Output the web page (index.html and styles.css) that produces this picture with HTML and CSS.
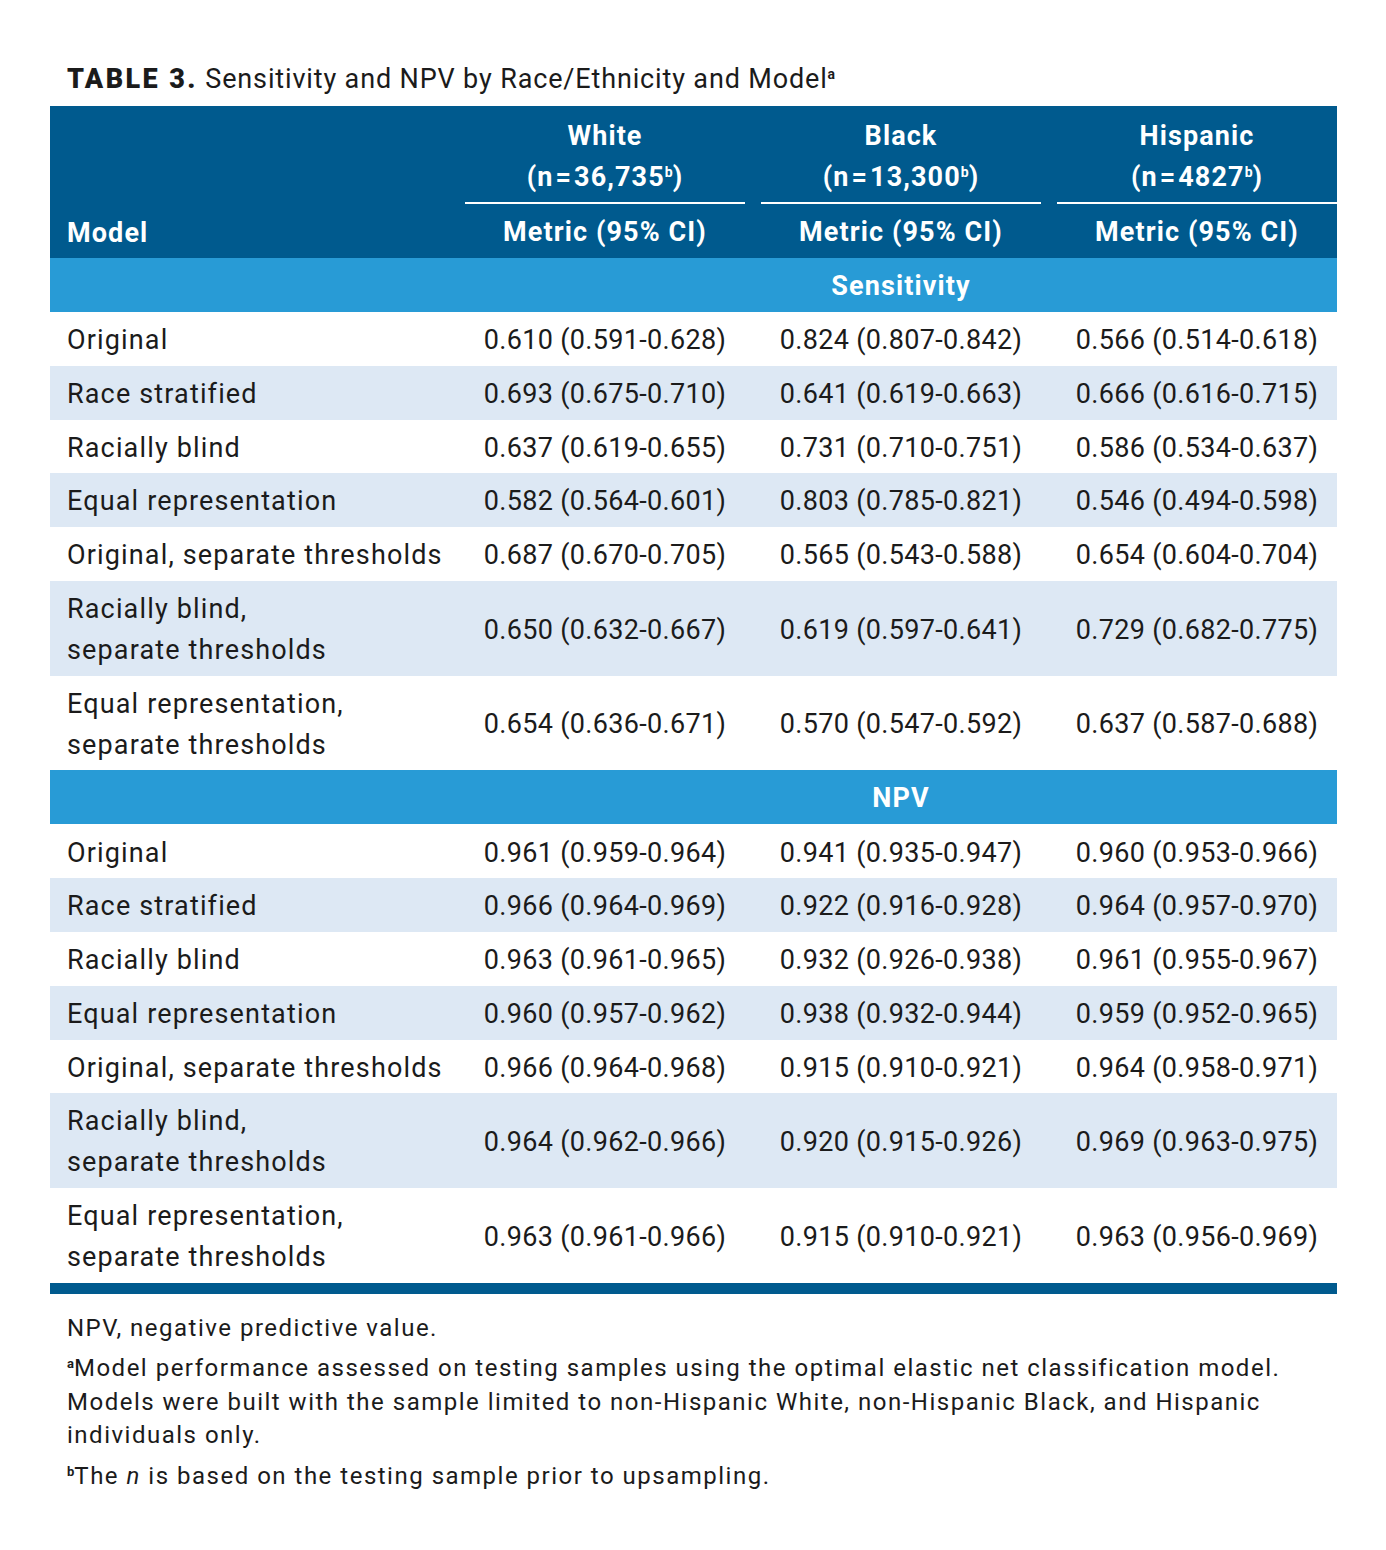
FILE: index.html
```html
<!DOCTYPE html>
<html lang="en">
<head>
<meta charset="utf-8">
<title>Table 3</title>
<link rel="stylesheet" href="styles.css">
</head>
<body>
<div class="page">
  <h1 class="title"><span class="tlabel">TABLE 3.</span> Sensitivity and NPV by Race/Ethnicity and Model<sup>a</sup></h1>
  <table class="tbl">
    <colgroup>
      <col class="c-model">
      <col class="c-data">
      <col class="c-data">
      <col class="c-data">
    </colgroup>
    <thead>
      <tr class="hrow1">
        <th class="model-h" rowspan="2">Model</th>
        <th class="grp"><div class="grp-in">White<br>(n<span class="eq">=</span>36,735<sup>b</sup>)</div></th>
        <th class="grp"><div class="grp-in">Black<br>(n<span class="eq">=</span>13,300<sup>b</sup>)</div></th>
        <th class="grp"><div class="grp-in">Hispanic<br>(n<span class="eq">=</span>4827<sup>b</sup>)</div></th>
      </tr>
      <tr class="hrow2">
        <th class="metric">Metric (95% CI)</th>
        <th class="metric">Metric (95% CI)</th>
        <th class="metric">Metric (95% CI)</th>
      </tr>
    </thead>
    <tbody>
      <tr class="section"><td></td><td colspan="3" class="sec-label">Sensitivity</td></tr>
      <tr><td class="m">Original</td><td class="d">0.610 (0.591-0.628)</td><td class="d">0.824 (0.807-0.842)</td><td class="d">0.566 (0.514-0.618)</td></tr>
      <tr class="alt"><td class="m">Race stratified</td><td class="d">0.693 (0.675-0.710)</td><td class="d">0.641 (0.619-0.663)</td><td class="d">0.666 (0.616-0.715)</td></tr>
      <tr><td class="m">Racially blind</td><td class="d">0.637 (0.619-0.655)</td><td class="d">0.731 (0.710-0.751)</td><td class="d">0.586 (0.534-0.637)</td></tr>
      <tr class="alt"><td class="m">Equal representation</td><td class="d">0.582 (0.564-0.601)</td><td class="d">0.803 (0.785-0.821)</td><td class="d">0.546 (0.494-0.598)</td></tr>
      <tr><td class="m">Original, separate thresholds</td><td class="d">0.687 (0.670-0.705)</td><td class="d">0.565 (0.543-0.588)</td><td class="d">0.654 (0.604-0.704)</td></tr>
      <tr class="alt"><td class="m">Racially blind,<br>separate thresholds</td><td class="d">0.650 (0.632-0.667)</td><td class="d">0.619 (0.597-0.641)</td><td class="d">0.729 (0.682-0.775)</td></tr>
      <tr><td class="m">Equal representation,<br>separate thresholds</td><td class="d">0.654 (0.636-0.671)</td><td class="d">0.570 (0.547-0.592)</td><td class="d">0.637 (0.587-0.688)</td></tr>
      <tr class="section"><td></td><td colspan="3" class="sec-label">NPV</td></tr>
      <tr><td class="m">Original</td><td class="d">0.961 (0.959-0.964)</td><td class="d">0.941 (0.935-0.947)</td><td class="d">0.960 (0.953-0.966)</td></tr>
      <tr class="alt"><td class="m">Race stratified</td><td class="d">0.966 (0.964-0.969)</td><td class="d">0.922 (0.916-0.928)</td><td class="d">0.964 (0.957-0.970)</td></tr>
      <tr><td class="m">Racially blind</td><td class="d">0.963 (0.961-0.965)</td><td class="d">0.932 (0.926-0.938)</td><td class="d">0.961 (0.955-0.967)</td></tr>
      <tr class="alt"><td class="m">Equal representation</td><td class="d">0.960 (0.957-0.962)</td><td class="d">0.938 (0.932-0.944)</td><td class="d">0.959 (0.952-0.965)</td></tr>
      <tr><td class="m">Original, separate thresholds</td><td class="d">0.966 (0.964-0.968)</td><td class="d">0.915 (0.910-0.921)</td><td class="d">0.964 (0.958-0.971)</td></tr>
      <tr class="alt"><td class="m">Racially blind,<br>separate thresholds</td><td class="d">0.964 (0.962-0.966)</td><td class="d">0.920 (0.915-0.926)</td><td class="d">0.969 (0.963-0.975)</td></tr>
      <tr class="last"><td class="m">Equal representation,<br>separate thresholds</td><td class="d">0.963 (0.961-0.966)</td><td class="d">0.915 (0.910-0.921)</td><td class="d">0.963 (0.956-0.969)</td></tr>
    </tbody>
  </table>
  <div class="notes">
    <p>NPV, negative predictive value.</p>
    <p><sup>a</sup>Model performance assessed on testing samples using the optimal elastic net classification model.<br>Models were built with the sample limited to non-Hispanic White, non-Hispanic Black, and Hispanic<br>individuals only.</p>
    <p><sup>b</sup>The <i>n</i> is based on the testing sample prior to upsampling.</p>
  </div>
</div>
</body>
</html>
```

FILE: styles.css
```css
html, body {
  margin: 0;
  padding: 0;
  background: #ffffff;
}

body {
  font-family: Roboto, "Liberation Sans", sans-serif;
  color: #1b1b1b;
}

.page {
  padding: 59px 50px 0 50px;
  width: 1286px;
}

.title {
  margin: 0 0 0 17px;
  font-size: 27px;
  font-weight: 400;
  line-height: 40px;
  height: 47px;
  letter-spacing: 0.85px;
  color: #1b1b1b;
  white-space: nowrap;
}

.title .tlabel {
  font-weight: 900;
  letter-spacing: 2.4px;
}

.title sup {
  font-size: 14px;
  font-weight: 700;
  vertical-align: 9px;
  line-height: 0;
  letter-spacing: 0;
}

.tbl {
  width: 1286px;
  border-collapse: collapse;
  border-spacing: 0;
  table-layout: fixed;
  font-size: 27px;
}

.c-model { width: 399px; }
.c-data { width: 296px; }

.tbl thead th {
  background: #005a8e;
  color: #ffffff;
  font-weight: 700;
  padding: 0;
  letter-spacing: 1.1px;
}

.hrow1 th.grp {
  padding: 10px 0 0 16px;
  vertical-align: top;
}

.grp-in {
  line-height: 41px;
  padding-bottom: 4px;
  border-bottom: 2px solid #ffffff;
  text-align: center;
}

.grp-in .eq {
  margin: 0 2px;
}

.grp-in sup {
  font-size: 14px;
  vertical-align: 9px;
  line-height: 0;
  letter-spacing: 0;
}

.tbl thead th.model-h {
  text-align: left;
  vertical-align: bottom;
  padding: 0 0 4px 17px;
  line-height: 41px;
}

.hrow2 th.metric {
  height: 54px;
  box-sizing: border-box;
  padding: 3px 0 0 16px;
  line-height: 41px;
  text-align: center;
  vertical-align: middle;
}

.section td {
  background: #289bd6;
  height: 54px;
  padding: 0;
  box-sizing: border-box;
}

.section .sec-label {
  color: #ffffff;
  font-weight: 700;
  letter-spacing: 1.1px;
  text-align: center;
  padding: 3px 0 0 16px;
  line-height: 41px;
}

.tbl tbody td.m,
.tbl tbody td.d {
  padding: 8.1px 0 4.7px 0;
  line-height: 41px;
  vertical-align: middle;
}

.tbl tbody td.m {
  padding-left: 17px;
  text-align: left;
  white-space: nowrap;
  letter-spacing: 1.15px;
}

.tbl tbody td.d {
  padding-left: 16px;
  text-align: center;
  white-space: nowrap;
  letter-spacing: 0.32px;
}

.tbl tbody tr.alt td {
  background: #dde8f4;
}

.tbl tbody tr.last td {
  border-bottom: 11px solid #005a8e;
}

.notes {
  padding: 18px 0 0 17px;
  font-size: 24px;
  line-height: 33.5px;
  letter-spacing: 1.5px;
  color: #1b1b1b;
}

.notes p {
  margin: 0 0 7px 0;
  white-space: nowrap;
}

.notes sup {
  font-size: 13px;
  font-weight: 700;
  vertical-align: 8px;
  line-height: 0;
  letter-spacing: 0;
}
```
